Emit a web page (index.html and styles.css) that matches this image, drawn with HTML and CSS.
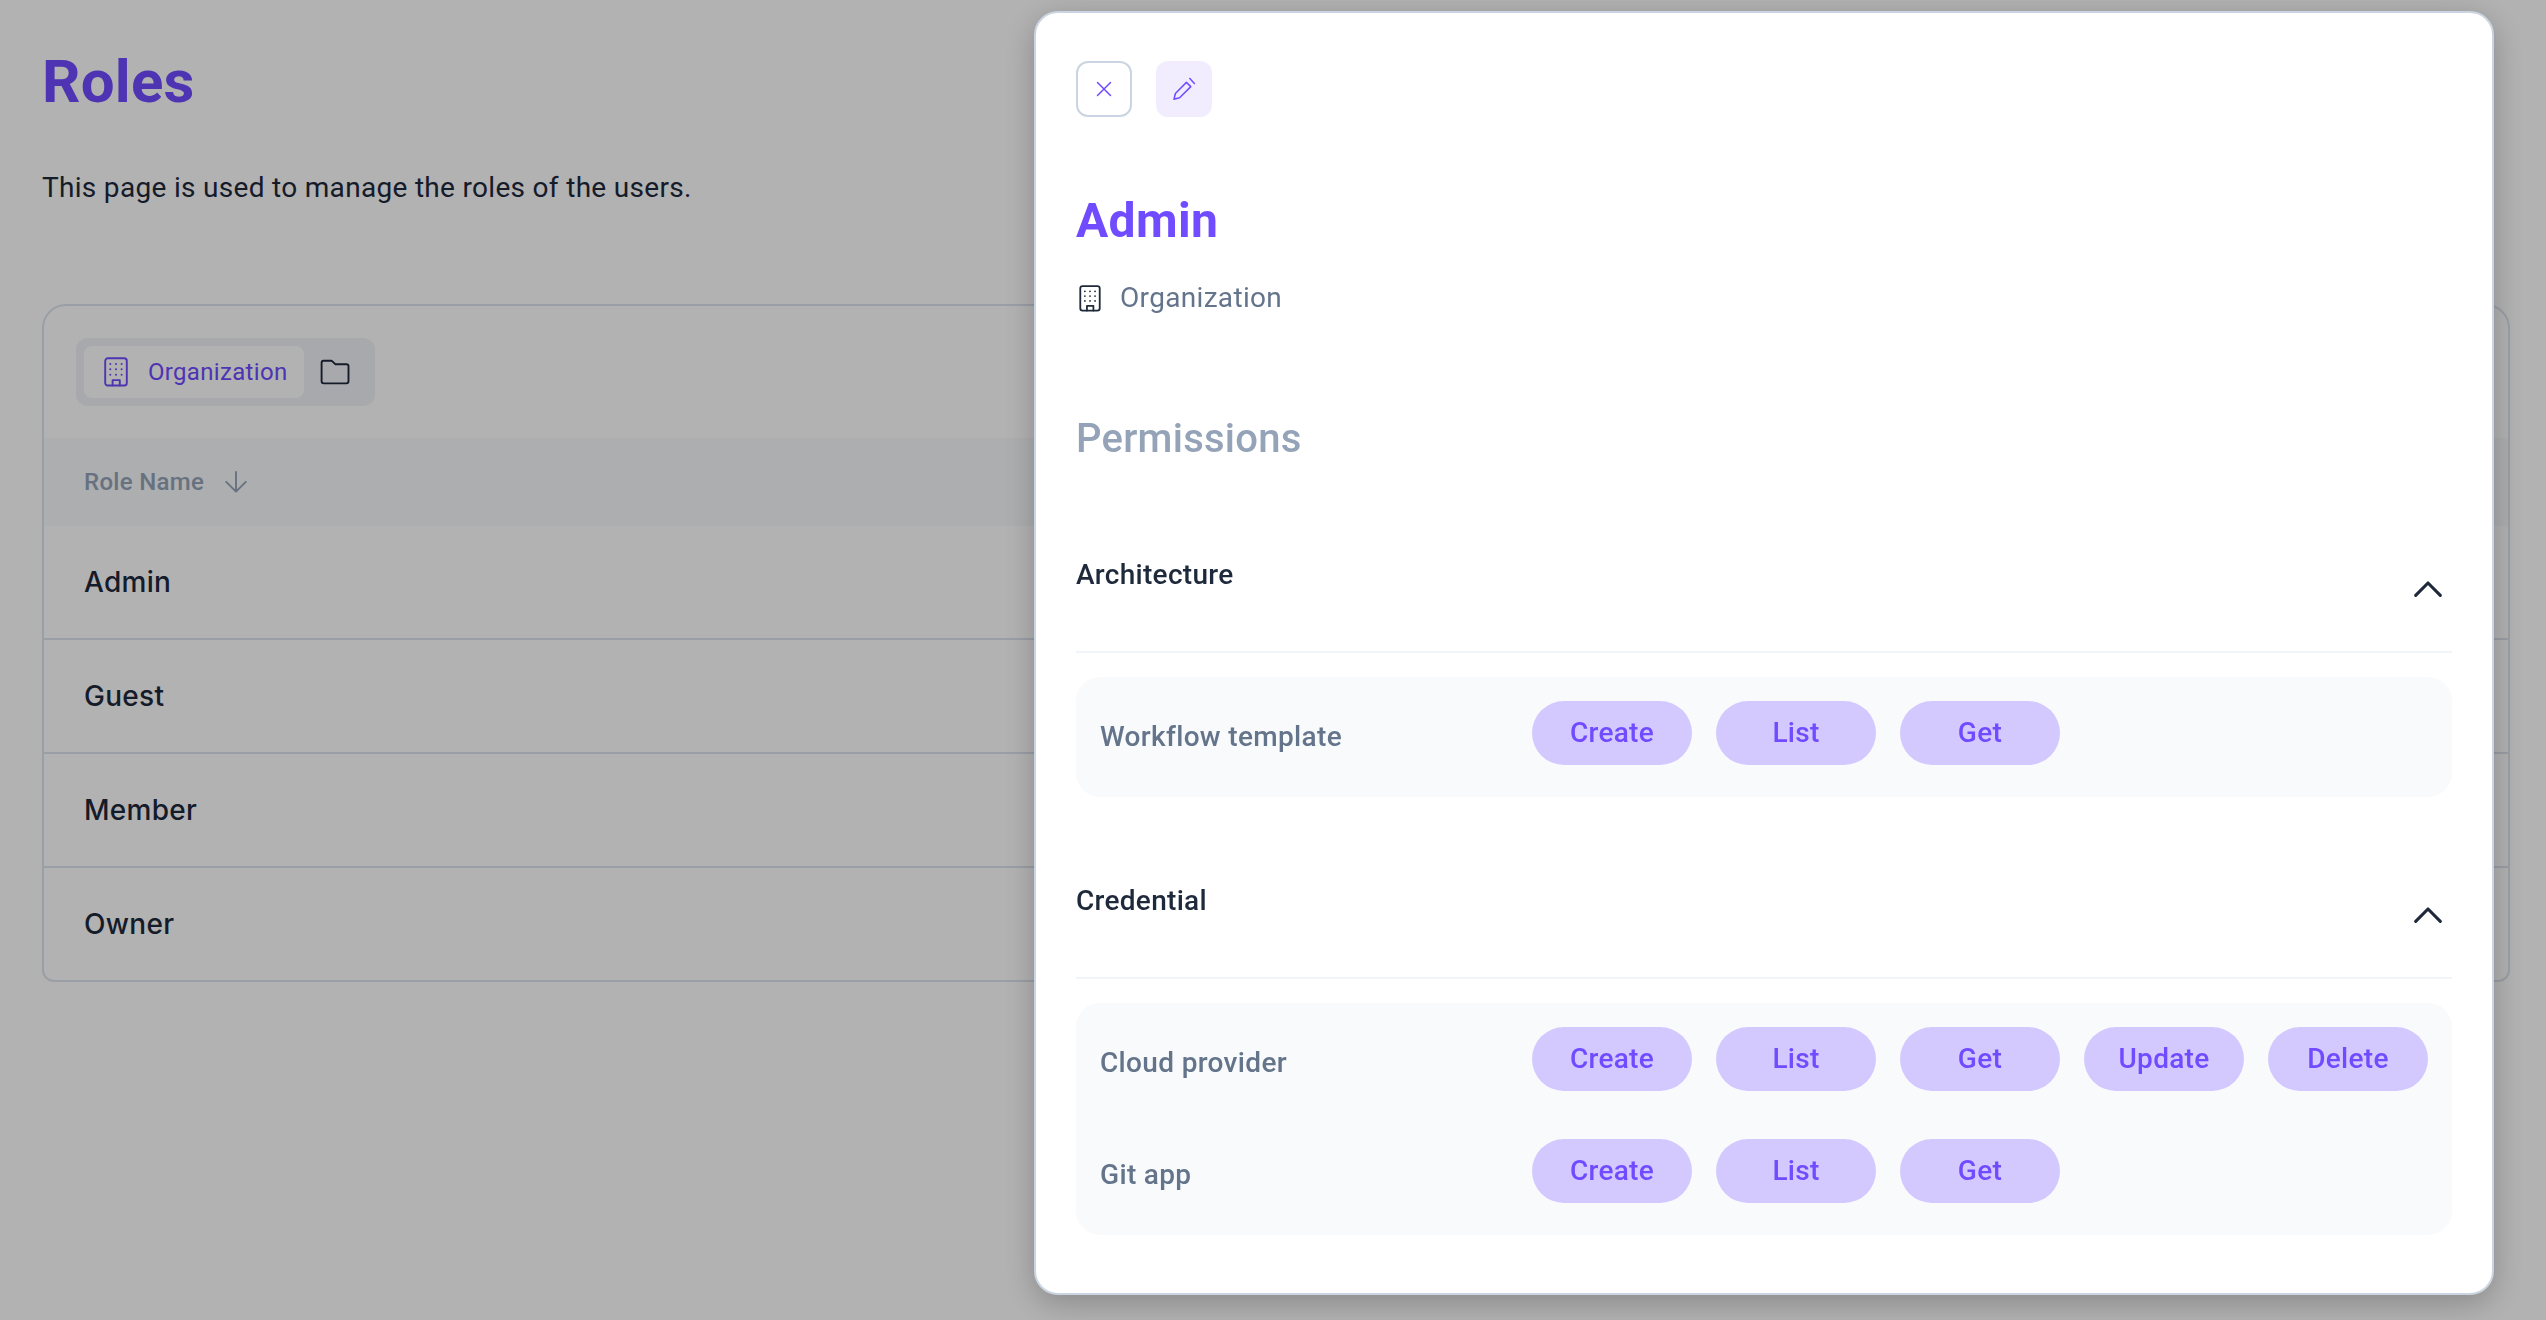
FILE: index.html
```html
<!DOCTYPE html>
<html lang="en">
<head>
<meta charset="utf-8">
<title>Roles</title>
<link rel="stylesheet" href="styles.css">
</head>
<body>
<svg class="defs" width="0" height="0" aria-hidden="true">
  <symbol id="building" viewBox="0 0 24 30">
    <rect x="1.2" y="1.3" width="21.6" height="27.2" rx="2.6"/>
    <path d="M8.6 28.4V23.1h7.2v5.3"/>
    <path class="dots" d="M6.3 7h.01M12 7h.01M17.6 7h.01M6.3 12.3h.01M12 12.3h.01M17.6 12.3h.01M6.3 17.7h.01M12 17.7h.01M17.6 17.7h.01"/>
  </symbol>
  <symbol id="chevron-up" viewBox="0 0 28 16">
    <path d="M1.7 14.3 14 2l12.3 12.3"/>
  </symbol>
</svg>

<main class="page">
  <h1 class="page-title">Roles</h1>
  <p class="page-intro">This page is used to manage the roles of the users.</p>
  <section class="card">
    <div class="toolbar">
      <div class="tabs">
        <button class="tab tab-active"><svg class="icon tab-icon"><use href="#building"/></svg>Organization</button>
        <button class="tab tab-folder" aria-label="Project">
          <svg class="icon folder-icon" viewBox="0 0 30 26"><path d="M3.6 1.7H11a1.8 1.8 0 0 1 1.4.6L15.2 5.2H26.4a2.1 2.1 0 0 1 2.1 2.1V22.3a2.1 2.1 0 0 1-2.1 2.1H3.7a2.1 2.1 0 0 1-2.1-2.1V3.8a2.1 2.1 0 0 1 2-2.1Z"/></svg>
        </button>
      </div>
    </div>
    <div class="table-head">Role Name
      <svg class="icon sort-icon" viewBox="0 0 22 22"><path d="M11 1v19.6M1.2 10.9l9.8 9.8 9.8-9.8"/></svg>
    </div>
    <div class="table-row">Admin</div>
    <div class="table-row">Guest</div>
    <div class="table-row">Member</div>
    <div class="table-row">Owner</div>
  </section>
</main>

<div class="overlay">
  <aside class="panel">
    <div class="actions">
      <button class="action action-close" aria-label="Close">
        <svg class="icon action-icon" viewBox="0 0 28 28"><path d="M7.5 7.5l13 13M20.5 7.5l-13 13"/></svg>
      </button>
      <button class="action action-edit" aria-label="Edit">
        <svg class="icon action-icon" viewBox="0 0 28 28"><path d="M5.4 18.5 16.4 7.4 20.8 11.6 9.6 22.8 4 24.3ZM19.8 3.6 24.4 8.4"/></svg>
      </button>
    </div>
    <h2 class="panel-title">Admin</h2>
    <div class="scope"><svg class="icon scope-icon"><use href="#building"/></svg>Organization</div>
    <h3 class="panel-subtitle">Permissions</h3>

    <section class="group">
      <header class="group-head"><h4 class="group-title">Architecture</h4><svg class="icon chevron"><use href="#chevron-up"/></svg></header>
      <div class="group-body">
        <div class="permission">
          <span class="permission-name">Workflow template</span>
          <div class="pills"><span class="pill">Create</span><span class="pill">List</span><span class="pill">Get</span></div>
        </div>
      </div>
    </section>

    <section class="group">
      <header class="group-head"><h4 class="group-title">Credential</h4><svg class="icon chevron"><use href="#chevron-up"/></svg></header>
      <div class="group-body">
        <div class="permission">
          <span class="permission-name">Cloud provider</span>
          <div class="pills"><span class="pill">Create</span><span class="pill">List</span><span class="pill">Get</span><span class="pill">Update</span><span class="pill">Delete</span></div>
        </div>
        <div class="permission">
          <span class="permission-name">Git app</span>
          <div class="pills"><span class="pill">Create</span><span class="pill">List</span><span class="pill">Get</span></div>
        </div>
      </div>
    </section>
  </aside>
</div>
</body>
</html>
```
FILE: styles.css
```css
* { box-sizing: border-box; }

body {
  margin: 0;
  height: 1320px;
  overflow: hidden;
  background: #fff;
  color: #1e293b;
  font-family: Roboto, "Liberation Sans", sans-serif;
  font-size: 28px;
  letter-spacing: 0.0105em;
}

h1, h2, h3, h4, p { margin: 0; }

button {
  padding: 0;
  border: 0;
  background: none;
  font: inherit;
  letter-spacing: inherit;
  color: inherit;
}

.defs { position: absolute; }

.icon {
  flex: none;
  fill: none;
  stroke: currentColor;
  stroke-width: 1.9;
  stroke-linecap: round;
  stroke-linejoin: round;
}

.dots { stroke-width: 2; }

/* Roles page */

.page { padding: 46px 36px 0 42px; }

.page-title {
  color: #704bff;
  font-size: 60px;
  font-weight: 700;
  line-height: 71px;
  letter-spacing: 0.004em;
}

.page-intro { margin-top: 51px; line-height: 40px; letter-spacing: 0.011em; }

.card {
  margin-top: 96px;
  border: 2px solid #dde4ed;
  border-radius: 24px 24px 12px 12px;
  overflow: hidden;
}

.toolbar { display: flex; padding: 32px; }

.tabs {
  display: flex;
  width: 299px;
  height: 68px;
  padding: 8px;
  border-radius: 12px;
  background: #f0f2f8;
}

.tab { display: flex; align-items: center; }

.tab-active {
  gap: 20px;
  width: 220px;
  padding-left: 20px;
  border-radius: 8px;
  background: #fff;
  color: #704bff;
  font-size: 24px;
  letter-spacing: 0.0135em;
}

.tab-icon { width: 24px; height: 30px; }
.tab-folder { padding-left: 16px; }
.folder-icon { width: 30px; height: 26px; }

.table-head {
  display: flex;
  align-items: center;
  gap: 21px;
  height: 88px;
  padding-left: 40px;
  background: #f7f9fb;
  color: #94a3b8;
  font-size: 24px;
  font-weight: 500;
  letter-spacing: 0.013em;
}

.sort-icon { width: 22px; height: 22px; stroke-width: 1.9; }

.table-row {
  height: 114px;
  padding-left: 40px;
  border-bottom: 2px solid #dde4ed;
  font-family: Inter, Roboto, sans-serif;
  font-weight: 500;
  line-height: 112px;
}

.table-row:last-child { height: 112px; border-bottom: 0; }

/* Role details */

.overlay {
  position: fixed;
  inset: 0;
  display: flex;
  justify-content: flex-end;
  padding: 11px 52px 25px 0;
  background: rgba(0, 0, 0, 0.3);
}

.panel {
  width: 1460px;
  padding: 48px 40px;
  border: 2px solid #cbd5e1;
  border-radius: 24px;
  background: #fff;
  box-shadow: 0 8px 32px rgba(0, 0, 0, 0.24);
}

.actions { display: flex; gap: 24px; }

.action {
  display: flex;
  align-items: center;
  justify-content: center;
  width: 56px;
  height: 56px;
  border-radius: 12px;
  color: #704bff;
}

.action-close { border: 2px solid #cbd5e1; }
.action-edit { background: #f1edff; }
.action-icon { width: 28px; height: 28px; stroke-width: 1.5; }

.panel-title {
  margin-top: 74px;
  color: #704bff;
  font-size: 48px;
  font-weight: 700;
  line-height: 60px;
  letter-spacing: 0.0075em;
}

.scope {
  display: flex;
  align-items: center;
  gap: 19px;
  margin-top: 27px;
  padding-left: 3px;
  color: #64748b;
  line-height: 40px;
  letter-spacing: 0.0115em;
}

.scope-icon { width: 22px; height: 27px; color: #1e293b; stroke-width: 2; }

.panel-subtitle {
  margin: 93px 0 58px;
  color: #94a3b8;
  font-size: 40px;
  font-weight: 500;
  line-height: 56px;
  letter-spacing: 0.0065em;
}

.group + .group { margin-top: 54px; }

.group-head {
  display: flex;
  align-items: center;
  justify-content: space-between;
  height: 128px;
  padding-right: 10px;
  border-bottom: 2px solid #f1f5f9;
}

.group-title {
  margin-bottom: 26px;
  font-size: 28px;
  font-weight: 500;
  line-height: 40px;
  letter-spacing: 0.0105em;
}

.chevron { width: 28px; height: 16px; margin-top: 2px; stroke-width: 3.1; }

.group-body {
  display: flex;
  flex-direction: column;
  gap: 40px;
  margin-top: 24px;
  padding: 24px;
  border-radius: 24px;
  background: #f8fafc;
}

.permission { display: flex; height: 72px; font-weight: 500; }
.permission-name { width: 432px; color: #64748b; line-height: 72px; letter-spacing: 0.012em; }
.pills { display: flex; gap: 24px; }

.pill {
  width: 160px;
  height: 64px;
  border-radius: 32px;
  background: #d4c9ff;
  color: #704bff;
  line-height: 64px;
  text-align: center;
}
```
